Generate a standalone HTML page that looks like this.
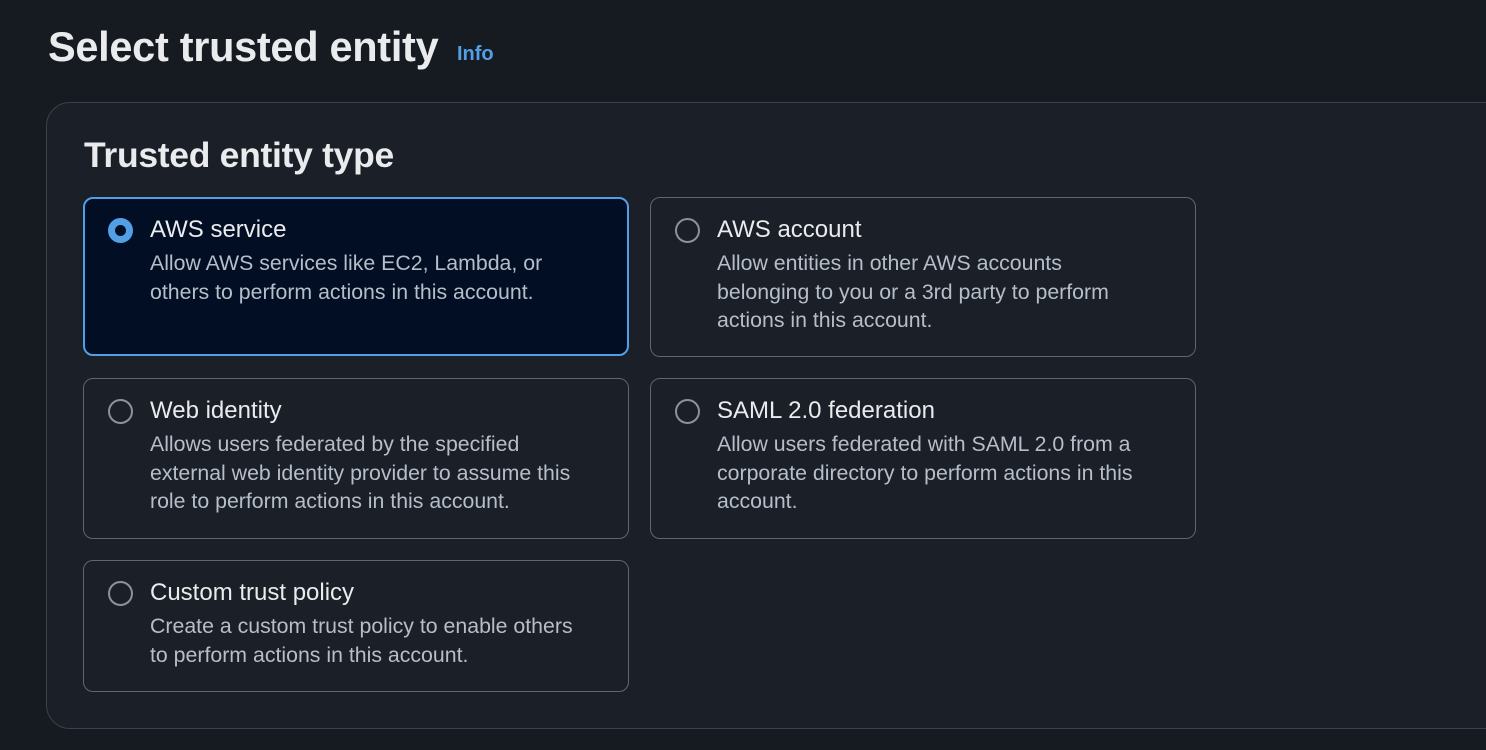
<!DOCTYPE html>
<html><head><meta charset="utf-8"><style>
*{box-sizing:border-box;margin:0;padding:0}
body{width:1486px;height:750px;overflow:hidden;background:#161b22;font-family:"Liberation Sans",Arial,sans-serif;color:#e9ebed;position:relative}
h1{position:absolute;left:48px;top:23px;font-size:41.5px;font-weight:bold;letter-spacing:-0.3px;color:#e9ebed}
.info{position:absolute;left:457px;top:43px;font-size:20px;font-weight:bold;color:#539fe5}
.box{position:absolute;left:46px;top:102px;width:1500px;height:627px;border:1px solid #3c414a;border-radius:24px;background:#1b1f27}
h2{position:absolute;left:84px;top:135px;font-size:35.5px;font-weight:bold;color:#e9ebed;letter-spacing:-0.3px}
.card{position:absolute;width:546px;border:1px solid #5f6670;border-radius:10px;background:#1b1f27}
.card.sel{border:2px solid #539fe5;background:#010e24}
.radio{position:absolute;left:24px;top:20px;width:25px;height:25px;border-radius:50%;border:2px solid #8d9299}
.sel .radio{border:7px solid #539fe5;background:#010e24;left:23px;top:19px}
.t{position:absolute;left:66px;top:18px;font-size:24px;color:#e9ebed}
.d{position:absolute;left:66px;top:51px;font-size:21.3px;line-height:28.7px;color:#b6bec9;width:500px}
.sel .t{left:65px;top:17px}.sel .d{left:65px;top:50px}
</style></head><body>
<h1>Select trusted entity</h1><span class="info">Info</span>
<div class="box"></div>
<h2>Trusted entity type</h2>
<div class="card sel" style="left:83px;top:197px;height:159px"><div class="radio"></div><div class="t">AWS service</div><div class="d">Allow AWS services like EC2, Lambda, or<br>others to perform actions in this account.</div></div>
<div class="card" style="left:650px;top:197px;height:160px"><div class="radio"></div><div class="t">AWS account</div><div class="d">Allow entities in other AWS accounts<br>belonging to you or a 3rd party to perform<br>actions in this account.</div></div>
<div class="card" style="left:83px;top:378px;height:161px"><div class="radio"></div><div class="t">Web identity</div><div class="d">Allows users federated by the specified<br>external web identity provider to assume this<br>role to perform actions in this account.</div></div>
<div class="card" style="left:650px;top:378px;height:161px"><div class="radio"></div><div class="t">SAML 2.0 federation</div><div class="d">Allow users federated with SAML 2.0 from a<br>corporate directory to perform actions in this<br>account.</div></div>
<div class="card" style="left:83px;top:560px;height:132px"><div class="radio"></div><div class="t">Custom trust policy</div><div class="d">Create a custom trust policy to enable others<br>to perform actions in this account.</div></div>
</body></html>
